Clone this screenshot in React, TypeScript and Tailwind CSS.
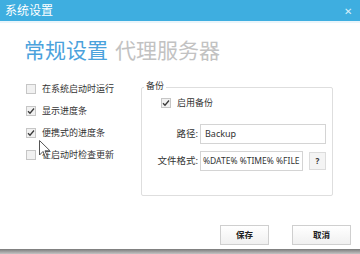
import React from "react";

const font = { fontFamily: '"Noto Sans", "Noto Sans CJK SC", sans-serif' };

function Box({ checked }: { checked?: boolean }) {
  return (
    <span className="flex h-[10px] w-[10px] items-center justify-center border border-[#c6c6c6] bg-[#f1f1f1]">
      {checked && (
        <svg width="8" height="8" viewBox="0 0 8 8">
          <path d="M1 4.2 L3 6.2 L7 1.5" fill="none" stroke="#3a3a3a" strokeWidth="1.3" />
        </svg>
      )}
    </span>
  );
}

function Check({ label, checked }: { label: string; checked?: boolean }) {
  return (
    <div className="flex h-[22px] items-center gap-[6px]">
      <Box checked={checked} />
      <span className="text-[9px] text-[#333]">{label}</span>
    </div>
  );
}

export default function App() {
  return (
    <div className="relative flex h-[254px] w-[360px] flex-col overflow-hidden bg-white" style={font}>
      <div className="flex h-[21px] items-center justify-between bg-[#3eaee0] pl-[5px] pr-[8px] text-white">
        <span className="text-[12px] leading-none">系统设置</span>
        <span className="text-[10px] leading-none text-[#d8eef9]">✕</span>
      </div>
      <div className="h-[2px] bg-[#eaf5fb]" />

      <div className="mt-[15px] flex h-[24px] items-center gap-[7px] pl-[24px] text-[21px] leading-none">
        <span className="text-[#4ba2dc]">常规设置</span>
        <span className="text-[#c2c2c2]">代理服务器</span>
      </div>

      <div className="mt-[16px] flex">
        <div className="w-[141px] pl-[26px]">
          <Check label="在系统启动时运行" />
          <Check label="显示进度条" checked />
          <Check label="便携式的进度条" checked />
          <Check label="在启动时检查更新" />
        </div>

        <div className="relative mt-[9px] w-[192px] rounded-[2px] border border-[#dedede] pb-[24px]">
          <span className="absolute left-[2px] top-[-8px] bg-white px-[2px] text-[9px] leading-[12px] text-[#333]">备份</span>
          <div className="mt-[8px] flex h-[14px] items-center gap-[6px] pl-[19px]">
            <Box checked />
            <span className="text-[9px] text-[#333]">启用备份</span>
          </div>
          <div className="mt-[14px] flex items-center gap-[2px]">
            <span className="w-[56px] text-right text-[9.5px] text-[#333]">路径:</span>
            <div className="flex h-[20px] w-[126px] items-center border border-[#d4d4d4] pl-[4px] text-[9px] text-[#333]">Backup</div>
          </div>
          <div className="mt-[7px] flex items-center gap-[2px]">
            <span className="w-[56px] text-right text-[9.5px] text-[#333]">文件格式:</span>
            <div className="flex h-[20px] w-[103px] items-center overflow-hidden whitespace-nowrap border border-[#d4d4d4] pl-[2px] text-[8.5px] text-[#333]">%DATE% %TIME% %FILE</div>
            <div className="ml-[4px] flex h-[18px] w-[17px] items-center justify-center border border-[#dcdcdc] bg-[#f4f4f4] text-[8px] font-bold text-[#333]">?</div>
          </div>
        </div>
      </div>

      <div className="mt-[29px] flex justify-end gap-[23px] pr-[9px]">
        <div className="flex h-[20px] w-[49px] items-center justify-center border border-[#cfcfcf] bg-gradient-to-b from-white to-[#f0f0f0] text-[8.5px] font-bold text-[#222]">保存</div>
        <div className="flex h-[20px] w-[59px] items-center justify-center border border-[#cfcfcf] bg-gradient-to-b from-white to-[#f0f0f0] text-[8.5px] font-bold text-[#222]">取消</div>
      </div>

      <div className="mt-auto h-[5px] bg-gradient-to-b from-[#7a7a7a] to-[#c4c4c4]" />

      <svg className="absolute left-[39px] top-[140px]" width="12" height="19" viewBox="0 0 12 19">
        <path d="M0.5 0.5 L0.5 15 L4 11.5 L6.5 17.5 L8.5 16.7 L6 10.8 L11 10.8 Z" fill="white" stroke="#555" strokeWidth="1" strokeLinejoin="round" />
      </svg>
    </div>
  );
}
